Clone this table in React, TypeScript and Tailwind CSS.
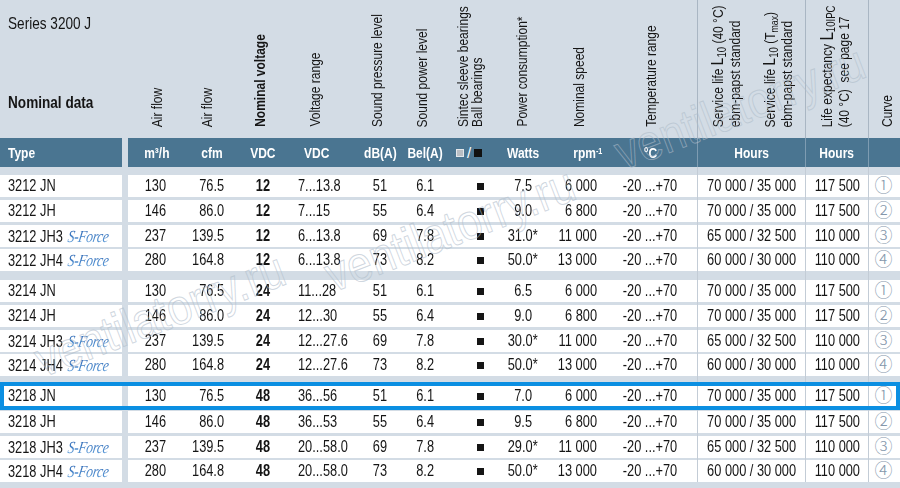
import type { ReactNode } from "react";

const GRID =
  "grid grid-cols-[122px_6px_54px_48px_66px_54px_60px_30px_60px_46px_58px_93px_108px_63px_32px]";

// Helvetica Condensed look: Liberation Sans squeezed along the text direction
const NL = "inline-block whitespace-nowrap scale-x-[0.8] origin-left";
const NR = "inline-block whitespace-nowrap scale-x-[0.8] origin-right";
const NC = "inline-block whitespace-nowrap scale-x-[0.8] origin-center";

type Fan = {
  type: string;
  sforce?: boolean;
  m3h: string;
  cfm: string;
  vdc: string;
  range: string;
  db: string;
  bel: string;
  watts: string;
  rpm: string;
  life: string;
  exp: string;
  curve: string;
};

const GROUPS: Fan[][] = [
  [
    { type: "3212 JN", m3h: "130", cfm: "76.5", vdc: "12", range: "7...13.8", db: "51", bel: "6.1", watts: "7.5", rpm: "6 000", life: "70 000 / 35 000", exp: "117 500", curve: "①" },
    { type: "3212 JH", m3h: "146", cfm: "86.0", vdc: "12", range: "7...15", db: "55", bel: "6.4", watts: "9.0", rpm: "6 800", life: "70 000 / 35 000", exp: "117 500", curve: "②" },
    { type: "3212 JH3", sforce: true, m3h: "237", cfm: "139.5", vdc: "12", range: "6...13.8", db: "69", bel: "7.8", watts: "31.0*", rpm: "11 000", life: "65 000 / 32 500", exp: "110 000", curve: "③" },
    { type: "3212 JH4", sforce: true, m3h: "280", cfm: "164.8", vdc: "12", range: "6...13.8", db: "73", bel: "8.2", watts: "50.0*", rpm: "13 000", life: "60 000 / 30 000", exp: "110 000", curve: "④" },
  ],
  [
    { type: "3214 JN", m3h: "130", cfm: "76.5", vdc: "24", range: "11...28", db: "51", bel: "6.1", watts: "6.5", rpm: "6 000", life: "70 000 / 35 000", exp: "117 500", curve: "①" },
    { type: "3214 JH", m3h: "146", cfm: "86.0", vdc: "24", range: "12...30", db: "55", bel: "6.4", watts: "9.0", rpm: "6 800", life: "70 000 / 35 000", exp: "117 500", curve: "②" },
    { type: "3214 JH3", sforce: true, m3h: "237", cfm: "139.5", vdc: "24", range: "12...27.6", db: "69", bel: "7.8", watts: "30.0*", rpm: "11 000", life: "65 000 / 32 500", exp: "110 000", curve: "③" },
    { type: "3214 JH4", sforce: true, m3h: "280", cfm: "164.8", vdc: "24", range: "12...27.6", db: "73", bel: "8.2", watts: "50.0*", rpm: "13 000", life: "60 000 / 30 000", exp: "110 000", curve: "④" },
  ],
  [
    { type: "3218 JN", m3h: "130", cfm: "76.5", vdc: "48", range: "36...56", db: "51", bel: "6.1", watts: "7.0", rpm: "6 000", life: "70 000 / 35 000", exp: "117 500", curve: "①" },
    { type: "3218 JH", m3h: "146", cfm: "86.0", vdc: "48", range: "36...53", db: "55", bel: "6.4", watts: "9.5", rpm: "6 800", life: "70 000 / 35 000", exp: "117 500", curve: "②" },
    { type: "3218 JH3", sforce: true, m3h: "237", cfm: "139.5", vdc: "48", range: "20...58.0", db: "69", bel: "7.8", watts: "29.0*", rpm: "11 000", life: "65 000 / 32 500", exp: "110 000", curve: "③" },
    { type: "3218 JH4", sforce: true, m3h: "280", cfm: "164.8", vdc: "48", range: "20...58.0", db: "73", bel: "8.2", watts: "50.0*", rpm: "13 000", life: "60 000 / 30 000", exp: "110 000", curve: "④" },
  ],
];

// top spacing above each row (gap strip), per group
const GAPS = [
  ["pt-[8px]", "pt-[3px]", "pt-[3px]", "pt-[2px]"],
  ["pt-[9px]", "pt-[3px]", "pt-[3px]", "pt-[2px]"],
  ["pt-[10px] pb-[4px]", "pt-[1px]", "pt-[3px]", "pt-[2px]"],
];

function Vert({ children, className = "" }: { children: ReactNode; className?: string }) {
  return (
    <div className="origin-bottom scale-y-[0.8]">
      <div className={`[writing-mode:vertical-rl] rotate-180 whitespace-nowrap text-[15px] leading-[14px] ${className}`}>
        {children}
      </div>
    </div>
  );
}

function SForce() {
  return (
    <span className="ml-[6px] inline-block -skew-x-12 bg-linear-to-b from-[#1a58ab] to-[#6aa8e0] bg-clip-text pr-[2px] font-['Liberation_Serif',serif] text-[17px] italic tracking-[-0.5px] text-transparent">
      S-Force
    </span>
  );
}

function DataRow({ r, pt, hl }: { r: Fan; pt: string; hl?: boolean }) {
  const h = hl ? "h-[20px]" : "h-[22px]";
  const cell = (content: ReactNode, cls: string, origin: string, line = false) => (
    <div className={`${pt} ${line ? "border-l border-[#c3ccd6]" : ""}`}>
      <div className={`${h} flex items-center whitespace-nowrap bg-white leading-none ${cls}`}>
        <span className={origin}>{content}</span>
      </div>
    </div>
  );
  return (
    <div
      className={`${GRID} ${
        hl
          ? "relative after:absolute after:inset-x-0 after:top-[6px] after:bottom-0 after:border-4 after:border-[#0b8fe2]"
          : ""
      }`}
    >
      {cell(
        <>
          {r.type}
          {r.sforce && <SForce />}
        </>,
        "pl-[8px]",
        NL,
      )}
      <div className={pt} />
      {cell(r.m3h, "justify-center", NC)}
      {cell(r.cfm, "justify-end pr-[6px]", NR)}
      {cell(r.vdc, "justify-center font-bold", NC)}
      {cell(r.range, "pl-[2px]", NL)}
      {cell(r.db, "justify-center", NC)}
      {cell(r.bel, "justify-center", NC)}
      {cell(<span className="block size-[7px] bg-[#151515]" />, "pl-[37px]", "")}
      {cell(r.watts, "justify-center", NC)}
      {cell(r.rpm, "justify-end pr-[7px]", NR)}
      {cell("-20 ...+70", "justify-center", NC)}
      {cell(r.life, "justify-center", NC, true)}
      {cell(r.exp, "justify-center", NC, true)}
      {cell(
        <span className="font-['DejaVu_Sans','Noto_Sans_CJK_JP',sans-serif] text-[18px] font-light text-[#8597ab]">{r.curve}</span>,
        "justify-center pr-[2px]",
        "",
        true,
      )}
    </div>
  );
}

function Watermark({ className }: { className: string }) {
  return (
    <span
      className={`absolute -translate-x-1/2 -translate-y-1/2 -rotate-[21deg] scale-x-[0.88] whitespace-nowrap font-['Liberation_Sans',sans-serif] text-[50px] text-transparent [-webkit-text-stroke:1px_rgba(175,188,202,0.6)] ${className}`}
    >
      ventilatorry.ru
    </span>
  );
}

export default function App() {
  const lineHead = "border-l border-[#a9b6c3]";
  const lab = "flex items-end pb-[11px]";
  const bar = "flex items-center justify-center bg-[#4a7591]";
  return (
    <div className="relative h-[488px] w-[900px] overflow-hidden bg-[#d3dce5] font-['Liberation_Sans',Arial,sans-serif] text-[16px] text-[#151515]">
      {/* column titles */}
      <div className={`${GRID} h-[138px] grid-rows-[138px]`}>
        <div className="flex flex-col justify-between pb-[25px] pl-[8px] pt-[14px] text-[17px] leading-[20px]">
          <span className={NL}>Series 3200 J</span>
          <span className={`${NL} font-bold`}>Nominal data</span>
        </div>
        <div />
        <div className={`${lab} justify-center pl-[4px]`}>
          <Vert>Air flow</Vert>
        </div>
        <div className={`${lab} justify-center pl-[2px]`}>
          <Vert>Air flow</Vert>
        </div>
        <div className={`${lab} justify-center pr-[6px]`}>
          <Vert className="font-bold">Nominal voltage</Vert>
        </div>
        <div className={`${lab} pl-[12px]`}>
          <Vert>Voltage range</Vert>
        </div>
        <div className={`${lab} justify-center pr-[6px]`}>
          <Vert>Sound pressure level</Vert>
        </div>
        <div className={`${lab} justify-center pr-[6px]`}>
          <Vert>Sound power level</Vert>
        </div>
        <div className={`${lab} justify-center`}>
          <Vert>
            Sintec sleeve bearings
            <br />
            Ball bearings
          </Vert>
        </div>
        <div className={`${lab} justify-center pr-[2px]`}>
          <Vert>Power consumption*</Vert>
        </div>
        <div className={`${lab} justify-center pl-[8px]`}>
          <Vert>Nominal speed</Vert>
        </div>
        <div className={`${lab} justify-center`}>
          <Vert>Temperature range</Vert>
        </div>
        <div className={`${lineHead} ${lab} justify-center gap-[19px]`}>
          <Vert>
            Service life <span className="text-[17px] leading-none">L</span>
            <span className="align-sub text-[12px] leading-none">10</span> (40 °C)
            <br />
            ebm-papst standard
          </Vert>
          <Vert>
            Service life <span className="text-[17px] leading-none">L</span>
            <span className="align-sub text-[12px] leading-none">10</span> (T
            <span className="align-sub text-[11px] leading-none">max</span>)
            <br />
            ebm-papst standard
          </Vert>
        </div>
        <div className={`${lineHead} ${lab} justify-center pr-[6px]`}>
          <Vert>
            Life expectancy <span className="text-[19px] leading-none">L</span>
            <span className="align-sub text-[12px] leading-none">10IPC</span>
            <br />
            (40 °C)&nbsp; see page 17
          </Vert>
        </div>
        <div className={`${lineHead} ${lab} justify-center pl-[4px]`}>
          <Vert>Curve</Vert>
        </div>
      </div>

      {/* unit bar */}
      <div className={`${GRID} h-[29px] text-[15px] font-bold leading-none text-white`}>
        <div className="flex items-center bg-[#4a7591] pl-[8px]">
          <span className={NL}>Type</span>
        </div>
        <div />
        <div className={`${bar} pl-[3px]`}>
          <span className={NC}>m³/h</span>
        </div>
        <div className={`${bar} justify-end! pr-[7px]`}>
          <span className={NR}>cfm</span>
        </div>
        <div className={bar}>
          <span className={NC}>VDC</span>
        </div>
        <div className={`${bar} justify-start! pl-[8px]`}>
          <span className={NL}>VDC</span>
        </div>
        <div className={bar}>
          <span className={NC}>dB(A)</span>
        </div>
        <div className={bar}>
          <span className={NC}>Bel(A)</span>
        </div>
        <div className={`${bar} gap-[3px] pr-[2px]`}>
          <span className="block size-[8px] border border-[#e4e8ec] bg-[#b9bec4]" />
          <span className="font-normal">/</span>
          <span className="block size-[8px] bg-[#111]" />
        </div>
        <div className={bar}>
          <span className={NC}>Watts</span>
        </div>
        <div className={`${bar} justify-end! pr-[2px]`}>
          <span className={NR}>
            rpm<sup className="text-[9px]">-1</sup>
          </span>
        </div>
        <div className={bar}>
          <span className={NC}>°C</span>
        </div>
        <div className={`${bar} border-l border-[#7e9cb2]`}>
          <span className={NC}>Hours</span>
        </div>
        <div className={`${bar} border-l border-[#7e9cb2]`}>
          <span className={NC}>Hours</span>
        </div>
        <div className={`${bar} border-l border-[#7e9cb2]`} />
      </div>

      {/* data */}
      {GROUPS.map((g, gi) =>
        g.map((r, ri) => <DataRow key={r.type} r={r} pt={GAPS[gi][ri]} hl={gi === 2 && ri === 0} />),
      )}

      <div className="pointer-events-none absolute inset-0">
        <Watermark className="left-[160px] top-[315px]" />
        <Watermark className="left-[450px] top-[230px]" />
        <Watermark className="left-[740px] top-[108px]" />
      </div>
    </div>
  );
}
